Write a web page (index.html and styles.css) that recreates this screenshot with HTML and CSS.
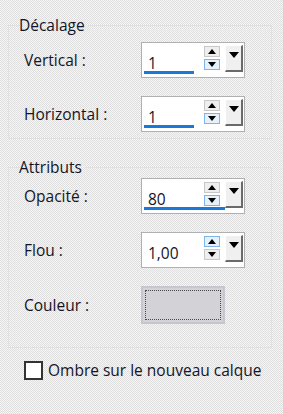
FILE: index.html
```html
<!DOCTYPE html>
<html lang="fr">
<head>
    <meta charset="UTF-8">
    <title>Ombre portée</title>
    <link rel="stylesheet" href="styles.css">
</head>
<body>
    <div class="panel">
        <!-- Décalage -->
        <fieldset class="group group-offset">
            <legend>Décalage</legend>
            <div class="row">
                <span class="label">Vertical :</span>
                <div class="spin">
                    <div class="field"><span class="value">1</span></div>
                    <div class="arrows"><span class="btn up"></span><span class="btn down hot"></span></div>
                    <span class="drop"></span>
                    <span class="bar" style="width: 50px"></span>
                </div>
            </div>
            <div class="row">
                <span class="label">Horizontal :</span>
                <div class="spin">
                    <div class="field"><span class="value">1</span></div>
                    <div class="arrows"><span class="btn up"></span><span class="btn down hot"></span></div>
                    <span class="drop"></span>
                    <span class="bar" style="width: 50px"></span>
                </div>
            </div>
        </fieldset>

        <!-- Attributs -->
        <fieldset class="group group-attr">
            <legend>Attributs</legend>
            <div class="row">
                <span class="label">Opacité :</span>
                <div class="spin">
                    <div class="field"><span class="value">80</span></div>
                    <div class="arrows"><span class="btn up"></span><span class="btn down hot"></span></div>
                    <span class="drop"></span>
                    <span class="bar" style="width: 81px"></span>
                </div>
            </div>
            <div class="row">
                <span class="label">Flou :</span>
                <div class="spin">
                    <div class="field"><span class="value">1,00</span></div>
                    <div class="arrows"><span class="btn up hot"></span><span class="btn down"></span></div>
                    <span class="drop"></span>
                </div>
            </div>
            <div class="row row-color">
                <span class="label">Couleur :</span>
                <div class="swatch"><span class="swatch-in"></span></div>
            </div>
        </fieldset>

        <label class="check">
            <span class="box"></span>
            <span>Ombre sur le nouveau calque</span>
        </label>
    </div>
</body>
</html>
```

FILE: styles.css
```css
body { margin: 0; width: 283px; height: 414px; font-family: "Open Sans", sans-serif; font-size: 15.5px; color: #141428;
       background: repeating-conic-gradient(#f6f6f6 0 25%, #dedede 0 50%) 0 0 / 2px 2px; overflow: hidden; }
.panel { padding: 0 11px 0 8px; }

.group { margin: 0; padding: 0 0 0 13px; border: 1px solid #e0e0e0; min-width: 0; }
.group legend { padding: 0 3px 0 0; margin-left: -3px; line-height: 20px; }
.group-offset { margin-top: 15px; padding-top: 7px; padding-bottom: 6px; }
.group-attr { margin-top: 18px; padding-top: 1px; padding-bottom: 23px; }

.row { display: flex; align-items: center; height: 36px; margin-bottom: 18px; }
.row:last-child { margin-bottom: 0; }
.row-color { height: 38px; }
.label { width: 117px; padding-left: 2px; }

.spin { position: relative; display: flex; width: 104px; height: 36px; box-sizing: border-box; border: 1px solid #b0b0b0; background: #fff; padding: 2px 1px 2px 1px; }
.field { flex: 1; }
.value { display: block; padding: 7px 0 0 5px; line-height: 22px; }
.bar { position: absolute; left: 2px; bottom: 3px; height: 3px; background: #1a78d6; }
.arrows { width: 20px; display: flex; flex-direction: column; gap: 2px; padding: 1px 0 0 1px; }
.btn { position: relative; width: 16px; height: 11px; box-sizing: border-box; border: 1px solid #c8c8c8; background: #eeeeee; }
.btn.hot { border-color: #7eb4ea; background: #e5f1fb; }
.btn::after { content: ""; position: absolute; left: 3px; border-left: 4px solid transparent; border-right: 4px solid transparent; }
.up::after { top: 2px; border-bottom: 5px solid #000; }
.down::after { top: 2px; border-top: 5px solid #000; }
.drop { position: relative; width: 18px; margin: 0 0 3px 1px; box-sizing: border-box; background: #f0f0f0;
        border-top: 1px solid #fff; border-left: 1px solid #fff; border-right: 2px solid #6a6a6a; border-bottom: 2px solid #6a6a6a; }
.drop::after { content: ""; position: absolute; left: 3px; top: 6px; border-left: 5px solid transparent; border-right: 5px solid transparent; border-top: 6px solid #000; }

.swatch { width: 84px; height: 38px; box-sizing: border-box; border: 2px solid #c6c6ce; background: #d3d3d7; padding: 2px; }
.swatch-in { display: block; height: 100%; box-sizing: border-box; border: 1px dotted #4a4a4a; }

.check { display: flex; align-items: center; gap: 5px; margin: 11px 0 0 16px; }
.box { width: 19px; height: 19px; box-sizing: border-box; border: 2px solid #333; background: #fff; }
```
